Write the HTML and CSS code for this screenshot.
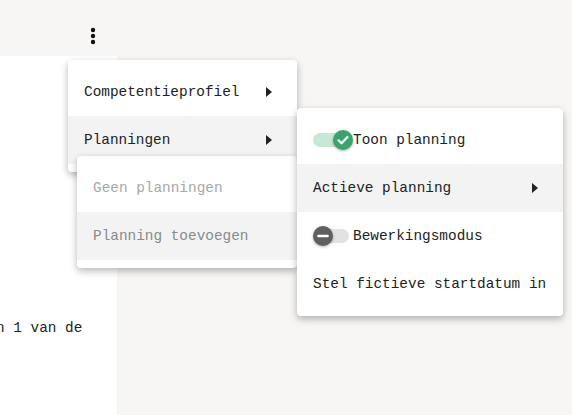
FILE: index.html
```html
<!DOCTYPE html>
<html>
<head>
	<meta charset="utf-8"/>
	<title>Planning</title>
	<link rel="stylesheet" href="styles.css">
</head>
<body>
<div class="topbar">
	<svg class="dots" width="6" height="18" viewBox="0 0 6 18">
		<circle cx="3" cy="3" r="2.2"/>
		<circle cx="3" cy="9" r="2.2"/>
		<circle cx="3" cy="15" r="2.2"/>
	</svg>
</div>
<div class="main">
	<div class="panel">
		<p class="snippet">n 1 van de</p>
	</div>
</div>

<!-- hoofdmenu -->
<div class="menu menu-main">
	<div class="item">Competentieprofiel<span class="arrow"></span></div>
	<div class="item active">Planningen<span class="arrow"></span></div>
</div>

<!-- submenu planningen -->
<div class="menu menu-plan">
	<div class="item disabled">Geen planningen</div>
	<div class="item active muted">Planning toevoegen</div>
</div>

<!-- submenu opties -->
<div class="menu menu-opts">
	<div class="item">
		<span class="toggle on"><span class="knob">
			<svg width="20" height="20" viewBox="0 0 20 20"><path d="M5.5 10.3l3 3 6-6.3" fill="none" stroke="#fff" stroke-width="2.2" stroke-linecap="round" stroke-linejoin="round"/></svg>
		</span></span>Toon planning
	</div>
	<div class="item active">Actieve planning<span class="arrow"></span></div>
	<div class="item">
		<span class="toggle off"><span class="knob">
			<svg width="20" height="20" viewBox="0 0 20 20"><path d="M5.5 10h9" stroke="#fff" stroke-width="2.6" stroke-linecap="round"/></svg>
		</span></span>Bewerkingsmodus
	</div>
	<div class="item">Stel fictieve startdatum in</div>
</div>
</body>
</html>
```

FILE: styles.css
```css
body{
	margin: 0;
	background: #f7f6f4;
	font-family: "Liberation Mono", "DejaVu Sans Mono", monospace;
	font-size: 14.4px;
	color: #222;
	height: 415px;
	overflow: hidden;
}
.topbar{
	height: 56px;
	position: relative;
}
.dots{
	position: absolute;
	left: 90px;
	top: 27px;
	fill: #111;
}
.main{
	display: flex;
	height: 359px;
}
.panel{
	width: 117px;
	background: #fff;
	overflow: hidden;
	white-space: nowrap;
}
.snippet{
	margin: 264px 0 0 -4px;
}

.menu{
	position: absolute;
	background: #fff;
	border-radius: 4px;
	padding: 8px 0;
	box-shadow: 0 3px 6px rgba(0,0,0,.16), 0 3px 10px rgba(0,0,0,.14);
}
.menu-main{
	left: 68px;
	top: 60px;
	width: 229px;
}
.menu-plan{
	left: 77px;
	top: 156px;
	width: 220px;
}
.menu-opts{
	left: 297px;
	top: 108px;
	width: 266px;
}
.item{
	height: 48px;
	display: flex;
	align-items: center;
	padding: 0 16px;
	white-space: nowrap;
	position: relative;
}
.item.active{
	background: #f3f3f3;
}
.item.disabled{
	color: #a8a8a8;
}
.item.muted{
	color: #8a8a8a;
}
.arrow{
	margin-left: auto;
	margin-right: 9px;
	width: 0;
	height: 0;
	border-top: 5px solid transparent;
	border-bottom: 5px solid transparent;
	border-left: 6px solid #222;
}

.toggle{
	width: 36px;
	height: 14px;
	border-radius: 7px;
	margin-right: 4px;
	position: relative;
}
.toggle.on{
	background: #c7e8d6;
}
.toggle.off{
	background: #e2e2e2;
}
.knob{
	position: absolute;
	top: -3px;
	width: 20px;
	height: 20px;
	border-radius: 50%;
	box-shadow: 0 1px 3px rgba(0,0,0,.3);
}
.knob svg{
	display: block;
}
.toggle.on .knob{
	right: -4px;
	background: #3ca36d;
}
.toggle.off .knob{
	left: 0;
	background: #5f5f5f;
}
```
